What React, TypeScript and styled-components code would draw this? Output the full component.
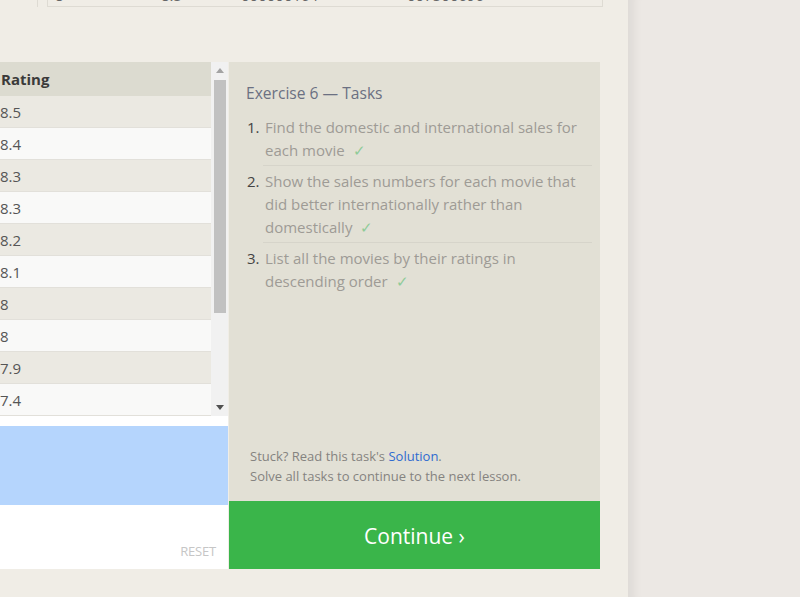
import React from "react";
import styled, { createGlobalStyle } from "styled-components";

const Global = createGlobalStyle`
  html, body { margin: 0; padding: 0; }
  body {
    background: #f0ede6;
    font-family: "Open Sans", "Noto Sans", Arial, sans-serif;
    overflow: hidden;
  }
`;

const Page = styled.div`
  display: flex;
  width: 800px;
  height: 597px;
  overflow: hidden;
`;

const Main = styled.div`
  width: 628px;
  flex: none;
  background: #f0ede6;
  display: flex;
  flex-direction: column;
`;

const Side = styled.div`
  flex: 1;
  background: #ece8e4;
  box-shadow: inset 14px 0 10px -8px rgba(0, 0, 0, 0.06);
`;

const Remnant = styled.div`
  display: flex;
  height: 7px;
  padding-left: 37px;
`;

const RemnantGutter = styled.div`
  width: 9px;
  border-left: 1px solid #dedbd3;
`;

const RemnantTable = styled.div`
  width: 554px;
  display: flex;
  border-left: 1px solid #dedbd3;
  border-right: 1px solid #dedbd3;
  border-bottom: 1px solid #dedbd3;
  overflow: hidden;
`;

const RemnantCell = styled.div<{ $w: number }>`
  width: ${(p) => p.$w}px;
  flex: none;
  overflow: hidden;
  height: 6px;
  span {
    display: block;
    font-size: 15px;
    line-height: 20px;
    margin-top: -15px;
    color: #666;
    padding-left: 7px;
  }
`;

const Exercise = styled.div`
  margin-top: 55px;
  display: flex;
  width: 600px;
  height: 507px;
  gap: 1px;
`;

const Left = styled.div`
  width: 228px;
  display: flex;
  flex-direction: column;
  background: #fff;
`;

const TableWrap = styled.div`
  height: 354px;
  flex: none;
  display: flex;
  background: #f9f9f8;
`;

const Table = styled.div`
  flex: 1;
  display: flex;
  flex-direction: column;
`;

const HeadRow = styled.div`
  height: 34px;
  flex: none;
  background: #dcdbd0;
  display: flex;
  align-items: center;
  padding-left: 1px;
  font-weight: 700;
  font-size: 15px;
  color: #3a3a3a;
`;

const Row = styled.div<{ $odd: boolean }>`
  height: 32px;
  flex: none;
  box-sizing: border-box;
  background: ${(p) => (p.$odd ? "#ebe9e2" : "#f9f9f8")};
  border-bottom: 1px solid #e2e0da;
  display: flex;
  align-items: center;
  font-size: 15px;
  color: #555;
`;

const Scrollbar = styled.div`
  width: 17px;
  background: #f1f1f1;
  display: flex;
  flex-direction: column;
  align-items: center;
`;

const Arrow = styled.div`
  height: 17px;
  width: 17px;
  display: flex;
  align-items: center;
  justify-content: center;
  svg { display: block; }
`;

const Thumb = styled.div`
  width: 12px;
  height: 233px;
  background: #c1c1c1;
  margin-top: 1px;
`;

const Spacer = styled.div`
  flex: 1;
`;

const Gap = styled.div`
  height: 10px;
  flex: none;
  background: #fff;
`;

const Selection = styled.div`
  height: 79px;
  flex: none;
  background: #b5d5fd;
`;

const EditorFoot = styled.div`
  flex: 1;
  background: #fff;
  display: flex;
  align-items: flex-end;
  justify-content: flex-end;
  padding: 0 12px 9px 0;
`;

const Reset = styled.span`
  font-size: 13px;
  color: #c6c6c6;
  letter-spacing: -0.2px;
`;

const Right = styled.div`
  flex: 1;
  display: flex;
  flex-direction: column;
`;

const Tasks = styled.div`
  height: 439px;
  flex: none;
  background: #e2e0d5;
  box-sizing: border-box;
  padding: 20px 8px 0 17px;
  display: flex;
  flex-direction: column;
`;

const Title = styled.div`
  font-size: 15.6px;
  color: #6b7082;
  line-height: 22px;
  margin-bottom: 12px;
`;

const List = styled.ol`
  margin: 0;
  padding: 0 0 0 17px;
  list-style: none;
  counter-reset: t;
`;

const Item = styled.li`
  position: relative;
  font-size: 15px;
  line-height: 23px;
  color: #9e9b95;
  padding: 0 0 3px 2px;
  margin-bottom: 4px;
  border-bottom: 1px solid #d6d4ca;
  counter-increment: t;
  &:last-child { border-bottom: none; }
  &::before {
    content: counter(t) ".";
    position: absolute;
    left: -16px;
    color: #444;
  }
`;

const Check = styled.span`
  color: #8fcb98;
  margin-left: 8px;
`;

const Help = styled.div`
  margin-top: auto;
  padding: 0 0 15px 4px;
  font-size: 13px;
  line-height: 20px;
  color: #858380;
  a { color: #2f6bd0; text-decoration: none; }
`;

const Continue = styled.button`
  flex: 1;
  border: none;
  background: #3ab54a;
  color: #fff;
  font-family: "Open Sans", "Noto Sans", Arial, sans-serif;
  font-size: 21px;
  padding: 2px 0 0;
  cursor: pointer;
`;

const ratings = ["8.5", "8.4", "8.3", "8.3", "8.2", "8.1", "8", "8", "7.9", "7.4"];

export default function App() {
  return (
    <>
      <Global />
      <Page>
        <Main>
          <Remnant>
            <RemnantGutter />
            <RemnantTable>
              <RemnantCell $w={106}><span>8</span></RemnantCell>
              <RemnantCell $w={80}><span>8.5</span></RemnantCell>
              <RemnantCell $w={166}><span>000000164</span></RemnantCell>
              <RemnantCell $w={200}><span>007500696</span></RemnantCell>
            </RemnantTable>
          </Remnant>
          <Exercise>
            <Left>
              <TableWrap>
                <Table>
                  <HeadRow>Rating</HeadRow>
                  {ratings.map((r, i) => (
                    <Row key={i} $odd={i % 2 === 0}>{r}</Row>
                  ))}
                </Table>
                <Scrollbar>
                  <Arrow>
                    <svg width="8" height="5" viewBox="0 0 8 5"><path d="M0 5 L4 0 L8 5 Z" fill="#a3a3a3" /></svg>
                  </Arrow>
                  <Thumb />
                  <Spacer />
                  <Arrow>
                    <svg width="8" height="5" viewBox="0 0 8 5"><path d="M0 0 L8 0 L4 5 Z" fill="#505050" /></svg>
                  </Arrow>
                </Scrollbar>
              </TableWrap>
              <Gap />
              <Selection />
              <EditorFoot>
                <Reset>RESET</Reset>
              </EditorFoot>
            </Left>
            <Right>
              <Tasks>
                <Title>Exercise 6 — Tasks</Title>
                <List>
                  <Item>Find the domestic and international sales for each movie<Check>✓</Check></Item>
                  <Item>Show the sales numbers for each movie that did better internationally rather than domestically<Check>✓</Check></Item>
                  <Item>List all the movies by their ratings in descending order<Check>✓</Check></Item>
                </List>
                <Help>
                  Stuck? Read this task's <a href="#">Solution</a>.
                  <br />
                  Solve all tasks to continue to the next lesson.
                </Help>
              </Tasks>
              <Continue>Continue ›</Continue>
            </Right>
          </Exercise>
        </Main>
        <Side />
      </Page>
    </>
  );
}
